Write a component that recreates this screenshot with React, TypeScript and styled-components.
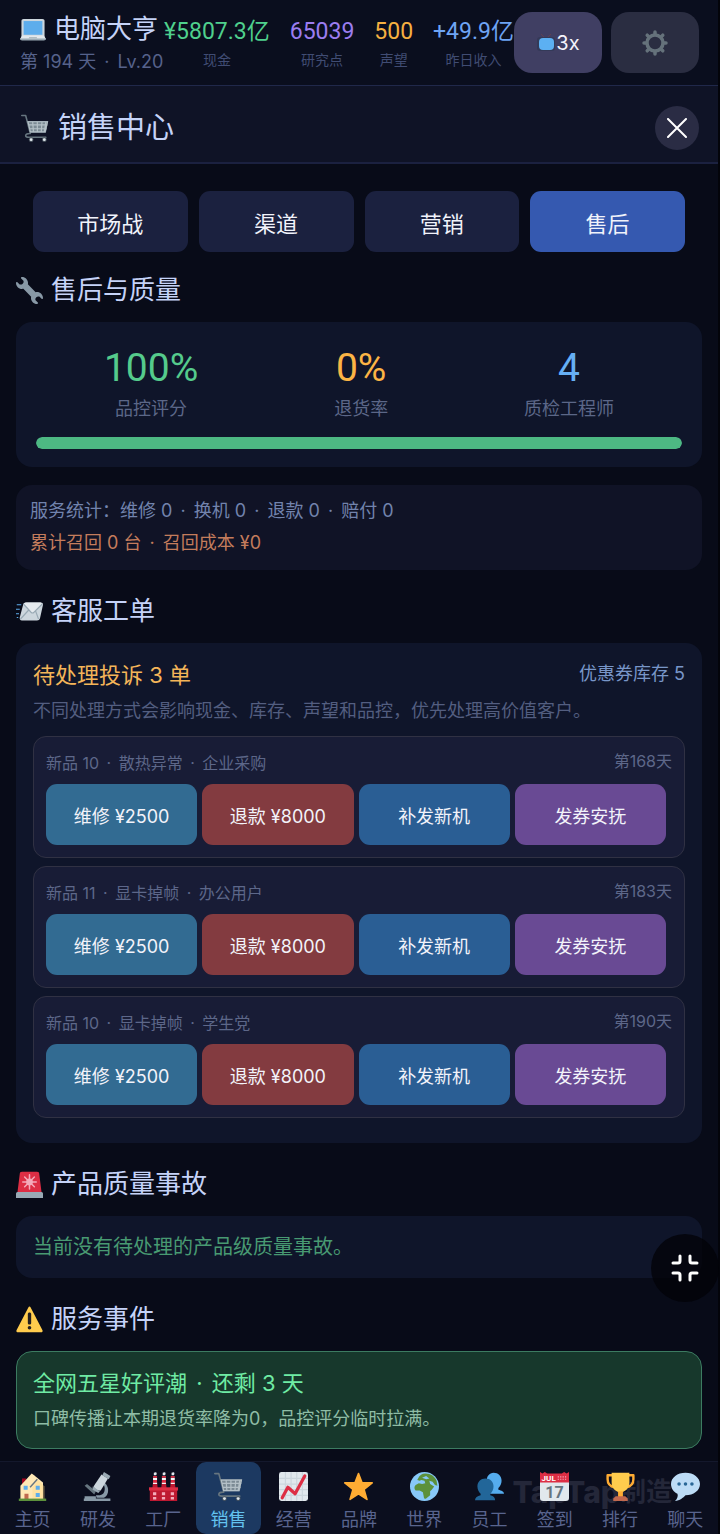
import React from "react";
import styled, { createGlobalStyle } from "styled-components";

const GlobalStyle = createGlobalStyle`
  *, *::before, *::after { box-sizing: border-box; }
  body {
    margin: 0;
    background: #02030a;
    font-family: Inter, "Noto Sans CJK SC", sans-serif;
    font-weight: 400;
    color: #c5d3f8;
  }
  button { font: inherit; border: 0; padding: 0; cursor: pointer; }
  h1, h2, h3, p { margin: 0; font-weight: 400; }
`;

const Shell = styled.div`
  display: flex;
  flex-direction: column;
  min-height: 100vh;
  background: #080b18;
  border-right: 2px solid #03040a;
`;

const Dot = styled.span`
  margin: 0 3px;
`;

/* Status header */

const StatusBar = styled.header`
  display: flex;
  align-items: flex-start;
  height: 86px;
  padding: 12px 19px 0 20px;
  background: #0a0e1e;
  border-bottom: 1px solid #20284a;
`;

const Brand = styled.div`
  flex: none;
  width: 144px;
`;

const GameName = styled.h1`
  display: flex;
  align-items: center;
  gap: 8px;
  font-size: 26px;
  line-height: 34px;
  white-space: nowrap;
`;

const DayLine = styled.p`
  font-size: 18px;
  line-height: 32px;
  white-space: nowrap;
  color: #56628b;
`;

const Stats = styled.dl`
  flex: 1;
  display: flex;
  justify-content: space-between;
  margin: 0;
`;

const Stat = styled.div`
  display: flex;
  flex-direction: column-reverse;
  align-items: center;
  white-space: nowrap;
`;

const StatValue = styled.dd<{ $color: string }>`
  margin: 0;
  font-family: Roboto, "Noto Sans CJK SC", sans-serif;
  font-size: 23px;
  line-height: 40px;
  color: ${(p) => p.$color};
`;

const StatLabel = styled.dt`
  font-size: 14px;
  line-height: 16px;
  color: #404c73;
`;

const HeaderButtons = styled.div`
  flex: none;
  display: flex;
  gap: 9px;
`;

const HeaderButton = styled.button<{ $bg: string }>`
  display: flex;
  align-items: center;
  justify-content: center;
  width: 88px;
  height: 61px;
  border-radius: 18px;
  background: ${(p) => p.$bg};
  font-size: 20px;
  color: #f3f3fb;
`;

/* Page title */

const TitleBar = styled.div`
  display: flex;
  align-items: center;
  justify-content: space-between;
  height: 78px;
  padding: 8px 19px 0 21px;
  background: #0f1326;
  border-bottom: 2px solid #1b2140;
`;

const PageTitle = styled.h2`
  display: flex;
  align-items: center;
  gap: 9px;
  font-size: 29px;
  line-height: 40px;
`;

const CloseButton = styled.button`
  display: grid;
  place-items: center;
  width: 44px;
  height: 44px;
  border-radius: 50%;
  background: #2a2c44;
`;

/* Content */

const Main = styled.main`
  flex: 1;
  padding: 27px 16px 9px;
`;

const Tabs = styled.div`
  display: grid;
  grid-template-columns: repeat(4, 1fr);
  gap: 11px;
  padding: 0 17px;
`;

const Tab = styled.button<{ $active?: boolean }>`
  height: 61px;
  border-radius: 11px;
  background: ${(p) => (p.$active ? "#3559b0" : "#1b213f")};
  font-size: 22px;
  color: #f1f3fb;
`;

const SectionTitle = styled.h3`
  display: flex;
  align-items: center;
  gap: 8px;
  padding: 19px 0 13px;
  font-size: 26px;
  line-height: 38px;
`;

const Card = styled.section`
  margin-bottom: 3px;
  padding: 17px;
  border-radius: 16px;
  background: #0f152a;
`;

const QualityCard = styled(Card)`
  padding: 20px 20px 18px;
`;

const Metrics = styled.dl`
  display: flex;
  justify-content: space-around;
  margin: 0 0 14px;
`;

const Metric = styled.div`
  display: flex;
  flex-direction: column-reverse;
  align-items: center;
`;

const MetricValue = styled.dd<{ $color: string }>`
  margin: 0;
  font-family: Roboto, "Noto Sans CJK SC", sans-serif;
  font-size: 39px;
  line-height: 52px;
  color: ${(p) => p.$color};
`;

const MetricLabel = styled.dt`
  font-size: 18px;
  line-height: 29px;
  color: #5c6788;
`;

const Meter = styled.div`
  height: 12px;
  border-radius: 6px;
  background: #1b213f;
  overflow: hidden;
`;

const MeterFill = styled.div`
  height: 100%;
  border-radius: 6px;
  background: #4db883;
`;

const NoteCard = styled(Card)`
  margin-top: 18px;
  padding: 10px 14px 11px;
  background: #101326;
`;

const NoteLine = styled.p<{ $color: string }>`
  font-size: 18px;
  line-height: 32px;
  color: ${(p) => p.$color};
`;

const TicketsCard = styled(Card)`
  padding: 14px 17px 25px;
`;

const CardHead = styled.div`
  display: flex;
  justify-content: space-between;
`;

const CardTitle = styled.p<{ $color: string }>`
  font-size: 22px;
  line-height: 37px;
  color: ${(p) => p.$color};
`;

const Stock = styled.span`
  font-size: 18px;
  line-height: 33px;
  color: #7896c8;
`;

const Hint = styled.p<{ $color?: string }>`
  font-size: 18px;
  line-height: 34px;
  color: ${(p) => p.$color ?? "#535e80"};
`;

const TicketList = styled.ul`
  display: grid;
  gap: 8px;
  margin: 8px 0 0;
  padding: 0;
  list-style: none;
`;

const Ticket = styled.li`
  padding: 11px 12px 12px 12px;
  border: 1px solid #303143;
  border-radius: 13px;
  background: #181c36;
`;

const TicketHead = styled.div`
  display: flex;
  justify-content: space-between;
  font-size: 16px;
  line-height: 30px;
  color: #5d6789;
`;

const TicketDay = styled.span`
  line-height: 26px;
`;

const Actions = styled.div`
  display: grid;
  grid-template-columns: repeat(4, 1fr);
  gap: 5px;
  margin: 6px 6px 0 0;
`;

const Action = styled.button<{ $bg: string }>`
  height: 61px;
  border-radius: 11px;
  background: ${(p) => p.$bg};
  font-size: 18px;
  color: #f2f3fa;
`;

const ClearCard = styled(Card)`
  padding: 16px 17px;
  font-size: 20px;
  line-height: 30px;
  color: #489a72;
`;

const EventCard = styled(Card)`
  padding: 13px 16px 12px;
  border: 1px solid #3c7b61;
  background: #17382c;
`;

/* Bottom navigation */

const NavBar = styled.nav`
  position: sticky;
  bottom: 0;
  background: #0b0e1e;
  border-top: 1px solid #14182c;
`;

const NavList = styled.ul`
  display: grid;
  grid-template-columns: repeat(11, 1fr);
  margin: 0;
  padding: 0;
  list-style: none;
`;

const NavItem = styled.button<{ $active?: boolean }>`
  position: relative;
  display: flex;
  flex-direction: column;
  align-items: center;
  width: 100%;
  height: 72px;
  padding-top: 10px;
  border-radius: 10px;
  background: ${(p) => (p.$active ? "#1c3961" : "transparent")};
  font-size: 18px;
  line-height: 24px;
  color: ${(p) => (p.$active ? "#63c3f0" : "#59648e")};
  svg { margin-bottom: 7px; }
`;

const Watermark = styled.div`
  position: absolute;
  right: 46px;
  bottom: 24px;
  display: flex;
  align-items: center;
  font-size: 26px;
  line-height: 36px;
  font-weight: 700;
  color: #242739;
  pointer-events: none;
  b { font-size: 30px; font-weight: 800; }
`;

const ShrinkButton = styled.button`
  position: fixed;
  right: 1px;
  bottom: 232px;
  display: grid;
  place-items: center;
  width: 68px;
  height: 68px;
  border-radius: 50%;
  background: rgba(2, 3, 8, 0.78);
`;

/* Icons */

type IconName =
  | "laptop" | "cart" | "wrench" | "mail" | "siren" | "warning" | "home" | "microscope"
  | "factory" | "chart" | "star" | "globe" | "people" | "calendar" | "trophy" | "chat";

const art: Record<IconName, React.ReactNode> = {
  laptop: (
    <>
      <path fill="#ccd6dd" d="M34 29c0 2-1 3-3 3H5c-2 0-3-1-3-3V7c0-2 1-3 3-3h26c2 0 3 1 3 3z" />
      <path fill="#5dadec" d="M5 7h26v19H5z" />
      <path fill="#e1e8ed" d="M3 27h30l3 5H0z" />
      <path fill="#9aaab4" d="M0 31h36v1c0 1-1 2-3 2H3c-2 0-3-1-3-2z" />
      <path fill="#aebbc1" d="M13 29h10l1 2H12z" />
    </>
  ),
  cart: (
    <>
      <path fill="none" stroke="#66757f" strokeWidth="2" strokeLinecap="round" strokeLinejoin="round" d="M1 2h5l6 23M11 25c-4 0-5 1-5 3s2 2 4 2h22" />
      <path fill="#7b8a94" d="M8 9h27l-3 15H12z" />
      <path fill="none" stroke="#b4c0c7" strokeWidth="1.500" d="M9 10h25l-3 13H12zM10 14h24M11 19h22M15 10l1 13M21 10v13M27 10l-1 13M32 10l-2 13" />
      <circle cx="13" cy="33" r="3" fill="#4b5660" />
      <circle cx="30" cy="33" r="3" fill="#4b5660" />
      <circle cx="13" cy="33" r="1.800" fill="#e1e8ed" />
      <circle cx="30" cy="33" r="1.800" fill="#e1e8ed" />
    </>
  ),
  wrench: (
    <path
      fill="#8899a6"
      d="M27.989 19.977c-.622 0-1.225.078-1.806.213L15.811 9.818c.134-.581.212-1.184.212-1.806C16.023 3.587 12.436 0 8.012 0 7.11 0 5.910.916 6.909 1.915l2.997 2.997s.999 1.998-.999 3.995-3.996.998-3.996.998L1.915 6.908C.916 5.909 0 7.105 0 8.012c0 4.425 3.587 8.012 8.012 8.012.622 0 1.225-.078 1.806-.212l10.371 10.371c-.135.581-.213 1.184-.213 1.806 0 4.425 3.588 8.011 8.012 8.011.901 0 2.101-.916 1.102-1.915l-2.997-2.997s-.999-1.998.999-3.995 3.995-.999 3.995-.999l2.997 2.997c1 .999 1.916-.196 1.916-1.102 0-4.425-3.587-8.012-8.011-8.012z"
    />
  ),
  mail: (
    <>
      <path fill="#ccd6dd" d="M36 9c0-2-1-3-3-3H14c-2 0-4 1-4.500 3L5 26c-.5 2 .5 4 3 4h20c2 0 3.500-1 4-3z" />
      <path fill="#e6ebef" d="M10 8l11 11c1 1 3 1 4 0L35 8c-1-2-2-2-3-2H14c-2 0-3 0-4 2z" />
      <path fill="none" stroke="#99aab5" strokeWidth="1.500" d="M10 8l10 11c1 1 3 1 4 0L35 8M6 28l11-12M30 28l-4-11" />
      <path stroke="#5dadec" strokeWidth="1.500" d="M1 9h6M0 15h5M0 21h4M1 26h2" />
    </>
  ),
  siren: (
    <>
      <path fill="#dd2e44" d="M5 4c0-2 1-3 3-3h20c2 0 3 1 3 3l3 24H2z" />
      <path fill="#99aab5" d="M0 30c0-1 1-2 2-2h32c1 0 2 1 2 2v6H0z" />
      <path fill="none" stroke="#f4abba" strokeWidth="2" strokeLinecap="round" d="M18 5v19M9 14.500h18M11.500 8l13 13M24.500 8l-13 13" />
      <circle cx="18" cy="14.500" r="4.500" fill="#f4abba" />
    </>
  ),
  warning: (
    <>
      <path fill="#ffcc4d" d="M2.653 35C.811 35-.001 33.662.847 32.027L16.456 1.972c.849-1.635 2.238-1.635 3.087 0l15.609 30.056c.85 1.634.037 2.972-1.805 2.972H2.653z" />
      <path fill="#231f20" d="M15.583 28.953a2.419 2.419 0 1 1 4.838 0 2.419 2.419 0 0 1-4.838 0zm.186-18.293c0-1.302.961-2.108 2.232-2.108 1.241 0 2.233.837 2.233 2.108v11.938c0 1.271-.992 2.108-2.233 2.108-1.271 0-2.232-.807-2.232-2.108V10.660z" />
    </>
  ),
  home: (
    <>
      <path fill="#a0041e" d="M5 8h5v10H5z" />
      <path fill="#ffe8b6" d="M3 34V17L17 2l3 2 11 9v21z" />
      <path fill="#ffd983" d="M18 34V19l7-9 8 8v16z" opacity=".4" />
      <path fill="none" stroke="#66757f" strokeWidth="1.800" d="M15 19L24 9" />
      <path fill="#5dadec" d="M7 17h5v5H7zM22 17h5v5h-5zM22 26h5v5h-5z" />
      <path fill="#c1694f" d="M8 27h5v7H8z" />
      <path fill="#5c913b" d="M1 33h34v3H1z" />
    </>
  ),
  microscope: (
    <>
      <path fill="#66757f" d="M2 17l3-2 11 9-2 4z" />
      <path fill="#8899a6" d="M25 12c5 3 7 8 6 13-1 4-3 6-5 7h-9l-1-3h5c4-1 6-4 6-8 0-3-1-5-3-7z" />
      <path fill="#ccd6dd" d="M23 3l8 5-9 15c-2 1-8-2-9-5z" />
      <path fill="#9aaab4" d="M26 0l8 5-2 4-8-5zM12 18l9 6-2 2-7-4z" />
      <path fill="#8899a6" d="M2 30h14v3H2zM1 33h33v3H1z" />
    </>
  ),
  factory: (
    <>
      <path fill="#be1931" d="M5 12h5l1 10H4zM16 12h5l1 10h-7zM27 12h5l1 10h-7z" />
      <path fill="#f5f8fa" d="M5 7h5v3H5zM16 7h5v3h-5zM27 7h5v3h-5zM5 13h5v2H5zM16 13h5v2h-5zM27 13h5v2h-5z" />
      <path fill="#dd2e44" d="M5 5h5v2H5zM16 5h5v2h-5zM27 5h5v2h-5zM5 10h5v3H5zM16 10h5v3h-5zM27 10h5v3h-5z" />
      <path fill="#e1e8ed" d="M6 1q5-2 3 3H6zM17 1q5-2 3 3h-3zM28 1q5-2 3 3h-3z" />
      <path fill="#be1931" d="M1 21h34v15H1z" />
      <path fill="#dd2e44" d="M0 19h36v4H0z" />
      <path fill="#f4abba" d="M5 25h4v4H5zM16 25h4v4h-4zM27 25h4v4h-4zM5 31h4v3H5zM16 31h4v3h-4zM27 31h4v3h-4z" />
    </>
  ),
  chart: (
    <>
      <rect width="36" height="36" rx="3" fill="#e1e8ed" />
      <path stroke="#ccd6dd" strokeWidth="1.500" d="M0 8h36M0 15h36M0 22h36M0 29h36M8 0v36M15 0v36M22 0v36M29 0v36" />
      <path fill="none" stroke="#dd2e44" strokeWidth="4" strokeLinecap="round" strokeLinejoin="round" d="M4 32l7-13 9 8L32 5" />
    </>
  ),
  star: (
    <path fill="#ffac33" stroke="#ffac33" strokeWidth="2" strokeLinejoin="round" d="M18 2l4.300 11.200 12.700.3-10.100 8.200L28.500 34 18 27.200 7.500 34l3.600-12.300L1 13.500l12.700-.3z" />
  ),
  globe: (
    <>
      <circle cx="18" cy="18" r="18" fill="#88c9f9" />
      <path fill="#5c913b" d="M10 8c2-4 5-6 9-6 7 0 12 4 14 9l1 6-3-1-3-4-4-1 1 4 5 3-3 4-2 2v5l-5 4c-2 1-3-1-3-3l-1-5-4-2-5 0c-2-2-2-5 0-7l4-2 4 1 4-1-1-3-4-1-2 1-3-1z" />
      <path fill="#88c9f9" d="M15 7l5-2 4 3-4 1z" />
    </>
  ),
  people: (
    <>
      <path fill="#55acee" d="M23 1c6 0 10 4 10 10 0 4-2 7-4 9v2c4 1 7 2 7 5H19l-4-17C14 6 18 1 23 1z" />
      <path fill="#226699" d="M13 8c6 0 10 4 10 10 0 4-2 7-4 9v2c4 1 6 3 6 6H0c0-3 3-5 7-6v-2c-2-2-4-5-4-9C3 12 7 8 13 8z" />
    </>
  ),
  calendar: (
    <>
      <path fill="#e1e8ed" d="M0 6h36v26c0 3-1 4-4 4H4c-3 0-4-1-4-4z" />
      <path fill="#dd2e44" d="M0 0l3 2 3-2 3 2h18l3-2 3 2 3-2v13H0z" />
      <text x="2" y="11" fontFamily="Roboto, sans-serif" fontSize="10" fontWeight="700" fill="#fff">JUL</text>
      <path stroke="#f4abba" strokeWidth="1.500" strokeDasharray="1.500 1.500" d="M22 6h11M22 9h11" />
      <text x="18" y="32" textAnchor="middle" fontFamily="Roboto, sans-serif" fontSize="20" fontWeight="700" fill="#66757f">17</text>
    </>
  ),
  trophy: (
    <>
      <path fill="none" stroke="#ffac33" strokeWidth="3" strokeLinejoin="round" d="M8 4H2v5c0 5 3 9 9 10M28 4h6v5c0 5-3 9-9 10" />
      <path fill="#ffcc4d" d="M7 1h22v12c0 7-5 11-9 12v6h-4v-6c-4-1-9-5-9-12z" />
      <path fill="#ffac33" d="M15 24h6v7h-6z" />
      <path fill="#c1694f" d="M12 30h12l3 3v3H9v-3z" />
    </>
  ),
  chat: (
    <>
      <path fill="#bddcf6" d="M18 1C8 1 0 7 0 15c0 5 3 10 8 12 1 3 0 6-3 9 6 0 10-4 13-7 10 0 18-6 18-14S28 1 18 1z" />
      <circle cx="10" cy="15" r="2.200" fill="#2a6797" />
      <circle cx="18" cy="15" r="2.200" fill="#2a6797" />
      <circle cx="26" cy="15" r="2.200" fill="#2a6797" />
    </>
  ),
};

const Icon = ({ name, size }: { name: IconName; size: number }) => (
  <svg width={size} height={size} viewBox="0 0 36 36" aria-hidden="true">
    {art[name]}
  </svg>
);

const MonitorIcon = () => (
  <svg width="20" height="20" viewBox="0 0 20 20" aria-hidden="true">
    <path stroke="#61414f" strokeWidth="1" d="M5 1l3 3M15 1l-3 3" />
    <rect x="1" y="4" width="18" height="14" rx="3" fill="#343a58" />
    <rect x="3" y="5" width="15" height="12" rx="4" fill="#5cb0f2" />
  </svg>
);

const GearIcon = () => (
  <svg width="26" height="26" viewBox="0 0 26 26" fill="none" stroke="#65727b" aria-hidden="true">
    <circle cx="13" cy="13" r="8" strokeWidth="3.500" />
    <g strokeWidth="3.500" strokeLinecap="round">
      {[0, 45, 90, 135, 180, 225, 270, 315].map((angle) => (
        <path key={angle} d="M13 4V2" transform={`rotate(${angle} 13 13)`} />
      ))}
    </g>
  </svg>
);

/* Joins the parts of a line with spaced middle dots. */
const Dotted = ({ parts }: { parts: string[] }) => (
  <>
    {parts.map((part, i) => (
      <React.Fragment key={part}>
        {i > 0 && <> <Dot>·</Dot> </>}
        {part}
      </React.Fragment>
    ))}
  </>
);

/* Data */

const stats = [
  { label: "现金", value: "¥5807.3亿", color: "#4fd08d" },
  { label: "研究点", value: "65039", color: "#9b7df0" },
  { label: "声望", value: "500", color: "#f5b041" },
  { label: "昨日收入", value: "+49.9亿", color: "#6ea4f4" },
];

const tabs = ["市场战", "渠道", "营销", "售后"];

const metrics = [
  { label: "品控评分", value: "100%", color: "#55cb8c" },
  { label: "退货率", value: "0%", color: "#fbb445" },
  { label: "质检工程师", value: "4", color: "#66aff4" },
];

const tickets = [
  { parts: ["新品 10", "散热异常", "企业采购"], day: "第168天" },
  { parts: ["新品 11", "显卡掉帧", "办公用户"], day: "第183天" },
  { parts: ["新品 10", "显卡掉帧", "学生党"], day: "第190天" },
];

const actions = [
  { label: "维修 ¥2500", bg: "#326b92" },
  { label: "退款 ¥8000", bg: "#833b40" },
  { label: "补发新机", bg: "#2a5e94" },
  { label: "发券安抚", bg: "#694a94" },
];

const navItems: { label: string; icon: IconName }[] = [
  { label: "主页", icon: "home" },
  { label: "研发", icon: "microscope" },
  { label: "工厂", icon: "factory" },
  { label: "销售", icon: "cart" },
  { label: "经营", icon: "chart" },
  { label: "品牌", icon: "star" },
  { label: "世界", icon: "globe" },
  { label: "员工", icon: "people" },
  { label: "签到", icon: "calendar" },
  { label: "排行", icon: "trophy" },
  { label: "聊天", icon: "chat" },
];

const quality = 100;

export default function App() {
  return (
    <>
      <GlobalStyle />
      <Shell>
        <StatusBar>
          <Brand>
            <GameName>
              <Icon name="laptop" size={26} />
              电脑大亨
            </GameName>
            <DayLine><Dotted parts={["第 194 天", "Lv.20"]} /></DayLine>
          </Brand>
          <Stats>
            {stats.map((s) => (
              <Stat key={s.label}>
                <StatLabel>{s.label}</StatLabel>
                <StatValue $color={s.color}>{s.value}</StatValue>
              </Stat>
            ))}
          </Stats>
          <HeaderButtons>
            <HeaderButton $bg="#403f63">
              <MonitorIcon />
              3x
            </HeaderButton>
            <HeaderButton $bg="#2a2d41" aria-label="设置">
              <GearIcon />
            </HeaderButton>
          </HeaderButtons>
        </StatusBar>

        <TitleBar>
          <PageTitle>
            <Icon name="cart" size={28} />
            销售中心
          </PageTitle>
          <CloseButton aria-label="关闭">
            <svg width="20" height="20" viewBox="0 0 20 20" stroke="#fff" strokeWidth="2" strokeLinecap="round" aria-hidden="true">
              <path d="M1 1l18 18M19 1L1 19" />
            </svg>
          </CloseButton>
        </TitleBar>

        <Main>
          <Tabs>
            {tabs.map((t) => (
              <Tab key={t} $active={t === "售后"}>{t}</Tab>
            ))}
          </Tabs>

          <SectionTitle><Icon name="wrench" size={27} />售后与质量</SectionTitle>
          <QualityCard>
            <Metrics>
              {metrics.map((m) => (
                <Metric key={m.label}>
                  <MetricLabel>{m.label}</MetricLabel>
                  <MetricValue $color={m.color}>{m.value}</MetricValue>
                </Metric>
              ))}
            </Metrics>
            <Meter>
              <MeterFill style={{ width: `${quality}%` }} />
            </Meter>
          </QualityCard>

          <NoteCard>
            <NoteLine $color="#7283ad">
              <Dotted parts={["服务统计：维修 0", "换机 0", "退款 0", "赔付 0"]} />
            </NoteLine>
            <NoteLine $color="#c47c5c">
              <Dotted parts={["累计召回 0 台", "召回成本 ¥0"]} />
            </NoteLine>
          </NoteCard>

          <SectionTitle><Icon name="mail" size={27} />客服工单</SectionTitle>
          <TicketsCard>
            <CardHead>
              <CardTitle $color="#f4b559">待处理投诉 3 单</CardTitle>
              <Stock>优惠券库存 5</Stock>
            </CardHead>
            <Hint>不同处理方式会影响现金、库存、声望和品控，优先处理高价值客户。</Hint>
            <TicketList>
              {tickets.map((t) => (
                <Ticket key={t.day}>
                  <TicketHead>
                    <span><Dotted parts={t.parts} /></span>
                    <TicketDay>{t.day}</TicketDay>
                  </TicketHead>
                  <Actions>
                    {actions.map((a) => (
                      <Action key={a.label} $bg={a.bg}>{a.label}</Action>
                    ))}
                  </Actions>
                </Ticket>
              ))}
            </TicketList>
          </TicketsCard>

          <SectionTitle><Icon name="siren" size={27} />产品质量事故</SectionTitle>
          <ClearCard>当前没有待处理的产品级质量事故。</ClearCard>

          <SectionTitle><Icon name="warning" size={27} />服务事件</SectionTitle>
          <EventCard>
            <CardTitle $color="#6feba4">
              <Dotted parts={["全网五星好评潮", "还剩 3 天"]} />
            </CardTitle>
            <Hint $color="#8fbda6">口碑传播让本期退货率降为0，品控评分临时拉满。</Hint>
          </EventCard>
        </Main>

        <NavBar>
          <Watermark aria-hidden="true"><b>TapTap</b>制造</Watermark>
          <NavList>
            {navItems.map((n) => (
              <li key={n.label}>
                <NavItem $active={n.label === "销售"}>
                  <Icon name={n.icon} size={29} />
                  {n.label}
                </NavItem>
              </li>
            ))}
          </NavList>
        </NavBar>
      </Shell>

      <ShrinkButton aria-label="退出全屏">
        <svg width="28" height="28" viewBox="0 0 28 28" fill="none" stroke="#fff" strokeWidth="3" strokeLinecap="round" strokeLinejoin="round" aria-hidden="true">
          <path d="M2 9h5q2 0 2-2V2M26 9h-5q-2 0-2-2V2M2 19h5q2 0 2 2v5M26 19h-5q-2 0-2 2v5" />
        </svg>
      </ShrinkButton>
    </>
  );
}
